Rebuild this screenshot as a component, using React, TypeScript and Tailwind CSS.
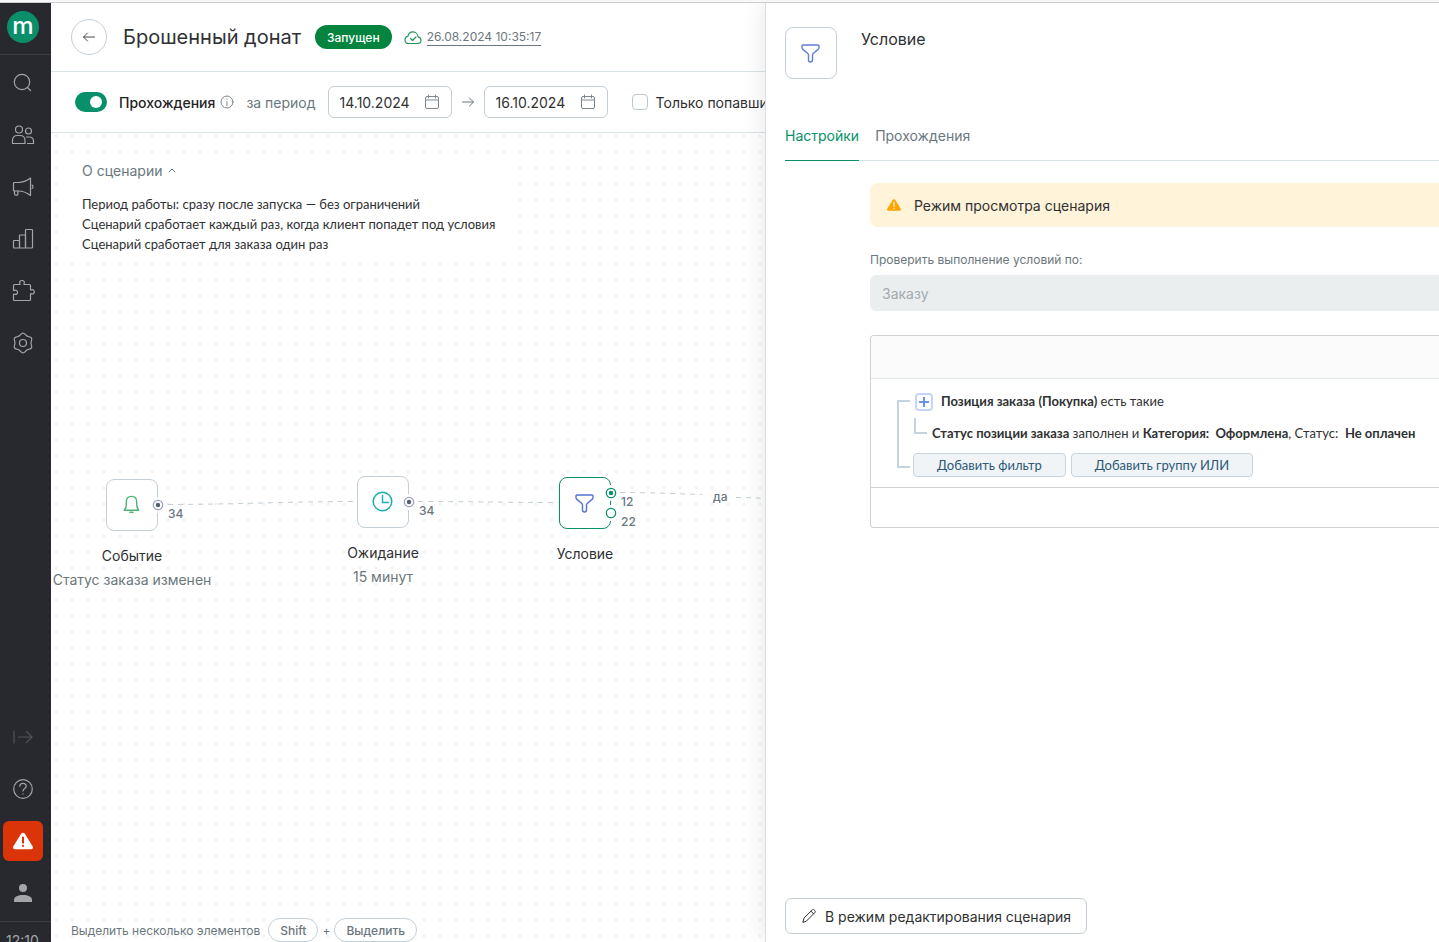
import React from 'react'

type IconProps = { className?: string }

const Svg = ({
  size,
  stroke = 1,
  className = '',
  children,
}: {
  size: number;
  stroke?: number;
  className?: string;
  children: React.ReactNode;
}) => (
  <svg
    width={size}
    height={size}
    viewBox={`0 0 ${size} ${size}`}
    fill="none"
    stroke="currentColor"
    strokeWidth={stroke}
    strokeLinecap="round"
    strokeLinejoin="round"
    aria-hidden="true"
    className={`shrink-0 ${className}`}
  >
    {children}
  </svg>
)

const FunnelIcon = ({ className }: IconProps) => (
  <Svg size={24} stroke={1.4} className={className}>
    <path d="M4 4h15a1 1 0 0 1 1 1v1.500c0 .8-.3 1.400-.9 1.900L14.200 12.500c-.5.400-.7.900-.7 1.500v4.500c0 1.500-.8 2.500-2 2.500s-2-.9-2-2V14c0-.6-.2-1.100-.7-1.500L3.900 8.400C3.300 7.900 3 7.300 3 6.500V5a1 1 0 0 1 1-1z" />
  </Svg>
)

const BellIcon = () => (
  <Svg size={24} stroke={1.4} className="text-[#4fb573]">
    <path d="M4.200 17.200h14.600c-1.600-1.500-2.100-3.200-2.100-6V9c0-3.300-2-5.600-5.200-5.600S6.300 5.700 6.300 9v2.200c0 2.800-.5 4.500-2.100 6z" />
    <path d="M10 19.200h3" strokeWidth="1.600" />
  </Svg>
)

const ClockIcon = () => (
  <Svg size={24} stroke={1.5} className="text-[#1ab0b0]">
    <circle cx="11.500" cy="11.500" r="9.300" />
    <path d="M11.500 5.500v7h6" />
  </Svg>
)

const CalendarIcon = () => (
  <Svg size={16} className="text-[#7d878d]">
    <rect x="1.500" y="2.500" width="13" height="12" rx="1.500" />
    <path d="M1.500 6h13M4.500 1v3M11.500 1v3" />
  </Svg>
)

const WarningIcon = ({ size, markClass }: { size: number; markClass: string }) => (
  <svg width={size} height={size} viewBox="0 0 20 20" aria-hidden="true" className="shrink-0">
    <path
      d="M8.300 2.600a2 2 0 0 1 3.400 0l7.900 12.600c.8 1.400.2 3-1.500 3H1.900c-1.700 0-2.300-1.600-1.500-3z"
      fill="currentColor"
    />
    <path d="M10 6.500v5.300M10 14.800v.300" fill="none" strokeWidth="2" strokeLinecap="round" className={markClass} />
  </svg>
)

const navItems = [
  {
    label: 'Поиск',
    icon: (
      <>
        <circle cx="11" cy="11" r="7.700" />
        <path d="M16.500 16.500l3 3" />
      </>
    ),
  },
  {
    label: 'Клиенты',
    icon: (
      <>
        <circle cx="8" cy="6.500" r="3.500" />
        <path d="M1.500 20.500v-3c0-3 2-5 5-5h2.500c3 0 5 2 5 5v3z" />
        <circle cx="17.500" cy="8" r="3" />
        <path d="M15.500 14h2.500c2.700 0 4.500 1.800 4.500 4.300v2.200h-6" />
      </>
    ),
  },
  {
    label: 'Кампании',
    icon: (
      <>
        <path d="M3.500 7.500h4c4 0 8-1.500 12-4.500v17.500c-4-3-8-4.500-12-4.500h-4c-.6 0-1-.4-1-1v-6.500c0-.6.400-1 1-1z" />
        <path d="M3.500 16v3c0 .8.500 1.200 1.200 1.200h1c.8 0 1.200-.5 1.200-1.200V16" />
        <path d="M21 10c1.300.4 1.300 3.100 0 3.500" />
      </>
    ),
  },
  {
    label: 'Отчеты',
    icon: (
      <>
        <rect x="2.500" y="13.500" width="6" height="7.500" rx=".5" />
        <rect x="8.500" y="8" width="6" height="13" rx=".5" />
        <rect x="14.500" y="2.500" width="7" height="18.500" rx=".8" />
      </>
    ),
  },
  {
    label: 'Интеграции',
    icon: (
      <path d="M3.500 5.500h5c.6 0 .7-.4.400-.9-.800-1.700.2-3.100 2.100-3.100s2.900 1.400 2.100 3.100c-.3.500-.2.900.4.900h5c.6 0 1 .4 1 1v4c0 .6.400.8.900.5 1.500-.8 2.900.1 2.900 1.800s-1.400 2.600-2.900 1.900c-.5-.3-.9-.1-.9.500v5.300c0 .6-.4 1-1 1h-15c-.6 0-1-.4-1-1v-4.800c0-.6.300-.8.900-.5 1.700.700 3.100-.2 3.100-1.900s-1.400-2.700-3.100-1.900c-.5.300-.9.100-.9-.500V6.500c0-.6.400-1 1-1z" />
    ),
  },
  {
    label: 'Настройки проекта',
    icon: (
      <>
        <path d="M12 2.200C13.800 2.200 14.400 4.100 16 5.100S19.600 5.500 20.500 7.100 20 10.100 20 12 21.400 15.300 20.500 16.900 17.600 17.900 16 18.900 13.800 21.800 12 21.800 9.600 19.900 8 18.900 4.400 18.500 3.500 16.900 4 13.900 4 12 2.600 8.700 3.500 7.100 6.400 6.100 8 5.100 10.200 2.200 12 2.200z" />
        <circle cx="12" cy="12" r="3.500" />
      </>
    ),
  },
]

const railButton = 'flex size-10 shrink-0 items-center justify-center rounded-md'

const Sidebar = () => (
  <aside className="flex w-[51px] shrink-0 flex-col overflow-hidden bg-[#28292e] text-[#a3a5a8]">
    <div className="flex h-[52px] shrink-0 border-b border-[#3c3d42] pl-[7px] pt-2">
      <a
        href="#"
        aria-label="На главную"
        className="flex size-8 items-center justify-center rounded-full bg-[#0b8f6b] text-2xl font-medium leading-7 text-white"
      >
        <span className="pb-0.5">m</span>
      </a>
    </div>
    <nav className="flex flex-col gap-3 pl-[3px] pt-2">
      {navItems.map((item) => (
        <button key={item.label} aria-label={item.label} className={railButton}>
          <Svg size={24} stroke={1.2}>{item.icon}</Svg>
        </button>
      ))}
    </nav>
    <div className="mt-auto flex flex-col gap-3 pb-2 pl-[3px]">
      <button aria-label="Развернуть меню" className={`${railButton} text-[#505156]`}>
        <Svg size={24} stroke={1.2}>
          <path d="M3 6v12M7.500 12h13.500M15.500 6.500l5.500 5.500-5.500 5.500" />
        </Svg>
      </button>
      <button aria-label="Справка" className={railButton}>
        <Svg size={24} stroke={1.2}>
          <circle cx="12" cy="12" r="9.300" />
          <path d="M8.800 9.300c0-1.800 1.400-2.900 3.200-2.900s3.200 1.100 3.200 2.900c0 2.200-3.200 2.300-3.200 4.600M12 16.800v.3" />
        </Svg>
      </button>
      <button aria-label="Предупреждения" className={`${railButton} bg-[#dc3409] text-white`}>
        <WarningIcon size={20} markClass="stroke-[#dc3409]" />
      </button>
      <button aria-label="Профиль" className={railButton}>
        <svg width="24" height="24" viewBox="0 0 24 24" fill="currentColor" aria-hidden="true">
          <circle cx="12" cy="7" r="4" />
          <path d="M3 21v-2c0-3.500 4-5 9-5s9 1.500 9 5v2z" />
        </svg>
      </button>
    </div>
    <div className="h-[21px] shrink-0 overflow-hidden border-t border-[#3c3d42] pl-[6px] pt-[9px] text-sm leading-5">
      12:10
    </div>
  </aside>
)

const Header = () => (
  <header className="flex h-[69px] shrink-0 items-center overflow-hidden whitespace-nowrap border-b border-[#d9e3e6] pl-5">
    <button
      aria-label="Назад"
      className="flex size-9 shrink-0 items-center justify-center rounded-full border border-[#c3cfd6] text-[#44484b]"
    >
      <Svg size={16}>
        <path d="M13.500 8H2.500M6.500 4L2.500 8l4 4" />
      </Svg>
    </button>
    <h1 className="ml-4 text-xl text-[#2f3133]">Брошенный донат</h1>
    <span className="ml-[14px] flex h-6 items-center rounded-full bg-[#04843e] px-3 pt-px text-xs font-medium text-white">
      Запущен
    </span>
    <Svg size={18} stroke={1.1} className="ml-3 text-[#1f9254]">
      <path d="M5 15.500h8.500c2 0 3.500-1.400 3.500-3.300 0-1.700-1.200-3-3-3.300-.1-2.900-2.200-5-5-5-2.500 0-4.500 1.700-4.900 4.100C2.200 8.500 1 10 1 11.900c0 2.100 1.700 3.600 4 3.600z" />
      <path d="M6.500 10.500l2 2 3.500-3.500" />
    </Svg>
    <button className="ml-[5px] border-b border-[#6b777e] text-xs leading-4 text-[#6b777e]">26.08.2024 10:35:17</button>
  </header>
)

const DateField = ({ label, value }: { label: string; value: string }) => (
  <label className="flex h-8 w-[124px] shrink-0 items-center rounded-md border border-[#c3cfd6] pl-[11px]">
    <input aria-label={label} defaultValue={value} className="w-[84px] bg-transparent pt-px text-sm text-[#2f3133] outline-none" />
    <CalendarIcon />
  </label>
)

const Toolbar = () => (
  <div className="flex h-[61px] shrink-0 items-center overflow-hidden whitespace-nowrap border-b border-[#d9e3e6] pl-6 text-sm">
    <button
      role="switch"
      aria-checked="true"
      aria-label="Прохождения"
      className="flex h-5 w-8 shrink-0 items-center justify-end rounded-full bg-[#07906a] pr-[5px]"
    >
      <span className="size-3 rounded-full bg-white"></span>
    </button>
    <span className="ml-3 pt-px font-medium text-[#1f2224]">Прохождения</span>
    <Svg size={14} className="ml-[5px] text-[#7d878d]">
      <circle cx="7" cy="7" r="6" />
      <path d="M7 6.500v4M7 4v.3" />
    </Svg>
    <span className="mx-3 pt-px text-[#6b777e]">за период</span>
    <DateField label="Начало периода" value="14.10.2024" />
    <Svg size={16} className="mx-2 text-[#6b777e]">
      <path d="M2.500 8h11M9.500 4l4 4-4 4" />
    </Svg>
    <DateField label="Конец периода" value="16.10.2024" />
    <label className="ml-6 flex items-center gap-2 text-[#2f3133]">
      <input type="checkbox" className="size-4 shrink-0 appearance-none rounded border border-[#b9c8d0] bg-white" />
      <span className="pt-px">Только попавшие</span>
    </label>
  </div>
)

const Port = ({ active, filled = true }: { active?: boolean; filled?: boolean }) => (
  <span
    className={`flex size-4 items-center justify-center rounded-full bg-white ${active ? 'text-[#07906a]' : 'text-[#9c9fc0]'}`}
  >
    <svg width="12" height="12" viewBox="0 0 12 12" fill="none" aria-hidden="true" className="shrink-0">
      <circle cx="6" cy="6" r="4.700" stroke="currentColor" strokeWidth="1.200" />
      {filled && <circle cx="6" cy="6" r="2.200" fill={active ? '#07906a' : '#55606a'} />}
    </svg>
  </span>
)

const NodeCard = ({ active, children }: { active?: boolean; children: React.ReactNode }) => (
  <div
    className={`flex size-[52px] items-center justify-center rounded-lg border bg-white ${active ? 'border-[#07906a]' : 'border-[#c3cfd6]'}`}
  >
    {children}
  </div>
)

const keyCap =
  "flex h-6 items-center rounded-full border border-[#c3cfd6] bg-white px-[11px] pt-px font-['Inter',sans-serif] font-medium"

const Canvas = () => (
  <section className="relative min-h-0 flex-1 overflow-hidden bg-white bg-[radial-gradient(circle,#ededed_1px,transparent_1px)] bg-[size:16px_16px] bg-[position:-3px_-5px]">
    <div className="flex">
      <div className="ml-4 mt-6 bg-white pb-1 pl-[15px] pr-4">
        <button className="flex items-center gap-1 text-sm leading-7 text-[#6b777e]">
          О сценарии
          <Svg size={12}>
            <path d="M3 7l3-3 3 3" />
          </Svg>
        </button>
        <div className="mt-[9px] font-['Lato','Noto_Sans',sans-serif] text-[13px] leading-5 text-[#2f3133]">
          <p>Период работы: сразу после запуска — без ограничений</p>
          <p>Сценарий сработает каждый раз, когда клиент попадет под условия</p>
          <p>Сценарий сработает для заказа один раз</p>
        </div>
      </div>
    </div>

    <svg className="absolute left-0 top-0 h-full w-full" fill="none" stroke="#c3ced5" strokeDasharray="5 5" aria-hidden="true">
      <path d="M117 371.500C180 371.500 240 368.500 306 368.500" />
      <path d="M367 368.500C420 368.500 460 369.500 508 369.500" />
      <path d="M569 359.500C610 359.500 640 361.500 651 361.500M685 364.500C700 364.500 710 365.500 730 365.500" />
    </svg>

    {/* Событие */}
    <div className="absolute left-[1px] top-[346px] flex w-40 flex-col items-center text-sm">
      <NodeCard>
        <BellIcon />
      </NodeCard>
      <p className="mt-[15px] leading-5 text-[#2f3133]">Событие</p>
      <p className="mt-1 whitespace-nowrap leading-5 text-[#6b777e]">Статус заказа изменен</p>
    </div>
    <div className="absolute left-[99px] top-[364px]">
      <Port />
    </div>
    <span className="absolute left-[117px] top-[373px] text-xs font-medium leading-4 text-[#6b777e]">34</span>

    {/* Ожидание */}
    <div className="absolute left-[252px] top-[343px] flex w-40 flex-col items-center text-sm">
      <NodeCard>
        <ClockIcon />
      </NodeCard>
      <p className="mt-[15px] leading-5 text-[#2f3133]">Ожидание</p>
      <p className="mt-1 leading-5 text-[#6b777e]">15 минут</p>
    </div>
    <div className="absolute left-[350px] top-[361px]">
      <Port />
    </div>
    <span className="absolute left-[368px] top-[370px] text-xs font-medium leading-4 text-[#6b777e]">34</span>

    {/* Условие */}
    <div className="absolute left-[454px] top-[344px] flex w-40 flex-col items-center text-sm">
      <NodeCard active>
        <FunnelIcon className="text-[#5274d1]" />
      </NodeCard>
      <p className="mt-[15px] leading-5 text-[#2f3133]">Условие</p>
    </div>
    <div className="absolute left-[552px] top-[352px] flex flex-col gap-1">
      <Port active />
      <Port active filled={false} />
    </div>
    <div className="absolute left-[570px] top-[359px] text-xs font-medium leading-5 text-[#6b777e]">
      <p>12</p>
      <p>22</p>
    </div>
    <span className="absolute left-[662px] top-[356px] text-xs font-medium leading-4 text-[#6b777e]">да</span>

    <div className="absolute bottom-0 left-5 flex items-center whitespace-nowrap text-xs text-[#6b777e]">
      <span className="pt-px">Выделить несколько элементов</span>
      <kbd className={`ml-2 ${keyCap}`}>Shift</kbd>
      <span className="mx-1 pt-px">+</span>
      <kbd className={keyCap}>Выделить</kbd>
    </div>
  </section>
)

const filterButton = 'h-6 rounded border border-[#c6d5de] bg-[#f0f4f7] px-[23px] leading-5 text-[#2d5878]'

const FilterBox = () => (
  <div className="mt-6 overflow-hidden rounded-l-sm border-y border-l border-[#cfd2d4] font-['Lato','Noto_Sans',sans-serif] text-[13px] text-[#2f3133]">
    <div className="h-[43px] border-b border-[#dfe7eb] bg-[#fbfbfb]"></div>
    <div className="flex whitespace-nowrap pb-[10px] pl-[26px] pt-[7px]">
      <div className="mb-[9px] mt-[14px] w-[13px] shrink-0 border-y-2 border-l-2 border-[#c3d4e0]"></div>
      <div className="ml-[3px]">
        <div className="flex h-8 items-center">
          <button
            aria-label="Добавить условие"
            className="ml-[2px] mr-2 flex size-[18px] items-center justify-center rounded border-2 border-[#c5d6f5] bg-white text-[#6a93e3]"
          >
            <Svg size={12} stroke={2}>
              <path d="M6 1v10M1 6h10" strokeLinecap="butt" />
            </Svg>
          </button>
          <p>
            <b>Позиция заказа (Покупка)</b> есть такие
          </p>
        </div>
        <div className="flex h-8">
          <div className="ml-[1px] mr-[5px] h-4 w-[13px] border-b-2 border-l-2 border-[#c3d4e0]"></div>
          <p className="leading-[30px]">
            <b>Статус позиции заказа</b> заполнен и <b>Категория:&nbsp; Оформлена</b>, Статус:&nbsp; <b>Не оплачен</b>
          </p>
        </div>
        <div className="flex gap-[5px] pt-[3px]">
          <button className={filterButton}>Добавить фильтр</button>
          <button className={filterButton}>Добавить группу ИЛИ</button>
        </div>
      </div>
    </div>
    <div className="h-10 border-t border-[#cfd2d4]"></div>
  </div>
)

const SettingsPanel = () => (
  <aside className="relative flex min-w-0 flex-[673] flex-col border-l border-[#d5dfe4] bg-white shadow-[-4px_0_20px_rgba(0,0,0,0.08)]">
    <div className="flex pl-[19px] pt-6">
      <div className="flex size-[52px] items-center justify-center rounded-lg border border-[#c3cfd6]">
        <FunnelIcon className="text-[#5f7fd6]" />
      </div>
      <h2 className="ml-6 text-base text-[#2f3133]">Условие</h2>
    </div>
    <div role="tablist" className="ml-[19px] mt-8 flex gap-4 border-b border-[#d9e3e6] text-sm">
      <button role="tab" aria-selected="true" className="-mb-px h-[50px] border-b border-[#07906a] text-[#07906a]">
        Настройки
      </button>
      <button role="tab" aria-selected="false" className="-mb-px h-[50px] border-b border-transparent text-[#6b777e]">
        Прохождения
      </button>
    </div>
    <div className="min-h-0 flex-1 overflow-hidden pl-[104px] pt-[22px]">
      <div className="flex h-11 items-center gap-3 rounded-l-lg bg-[#fff3d9] pl-4 text-sm text-[#2f3133]">
        <span className="flex size-4 items-center justify-center text-[#ffa500]">
          <WarningIcon size={14} markClass="stroke-[#fff3d9]" />
        </span>
        <span className="pt-px">Режим просмотра сценария</span>
      </div>
      <label htmlFor="check-by" className="mt-[25px] block text-xs leading-4 text-[#6b777e]">
        Проверить выполнение условий по:
      </label>
      <select
        id="check-by"
        disabled
        className="mt-[7px] h-9 w-full appearance-none rounded-l-md bg-[#ebeeef] px-3 pt-px text-sm text-[#a3abb0] opacity-100"
      >
        <option>Заказу</option>
      </select>
      <FilterBox />
    </div>
    <div className="flex pb-2 pl-[19px]">
      <button className="flex h-9 items-center gap-2 whitespace-nowrap rounded-md border border-[#c3cfd6] px-[15px] text-sm text-[#2f3133]">
        <Svg size={16}>
          <path d="M2 14l1-4L11.300 1.900c.6-.6 1.300-.6 1.800-.1l.9.900c.5.500.5 1.200-.1 1.800L5.500 13z M10 3.200l2.700 2.700" />
        </Svg>
        <span className="pt-px">В режим редактирования сценария</span>
      </button>
    </div>
  </aside>
)

const App = () => {
  return (
    <div className="flex h-screen flex-col overflow-hidden bg-white font-['Inter',sans-serif]">
      <div className="h-[3px] shrink-0 border-b border-[#cbcdce] bg-[#f8f8f8]"></div>
      <div className="flex min-h-0 flex-1 overflow-hidden">
        <Sidebar />
        <div className="flex min-w-0 flex-1">
          <main className="flex min-w-0 flex-[714] flex-col">
            <Header />
            <Toolbar />
            <Canvas />
          </main>
          <SettingsPanel />
        </div>
      </div>
    </div>
  )
}

export default App
